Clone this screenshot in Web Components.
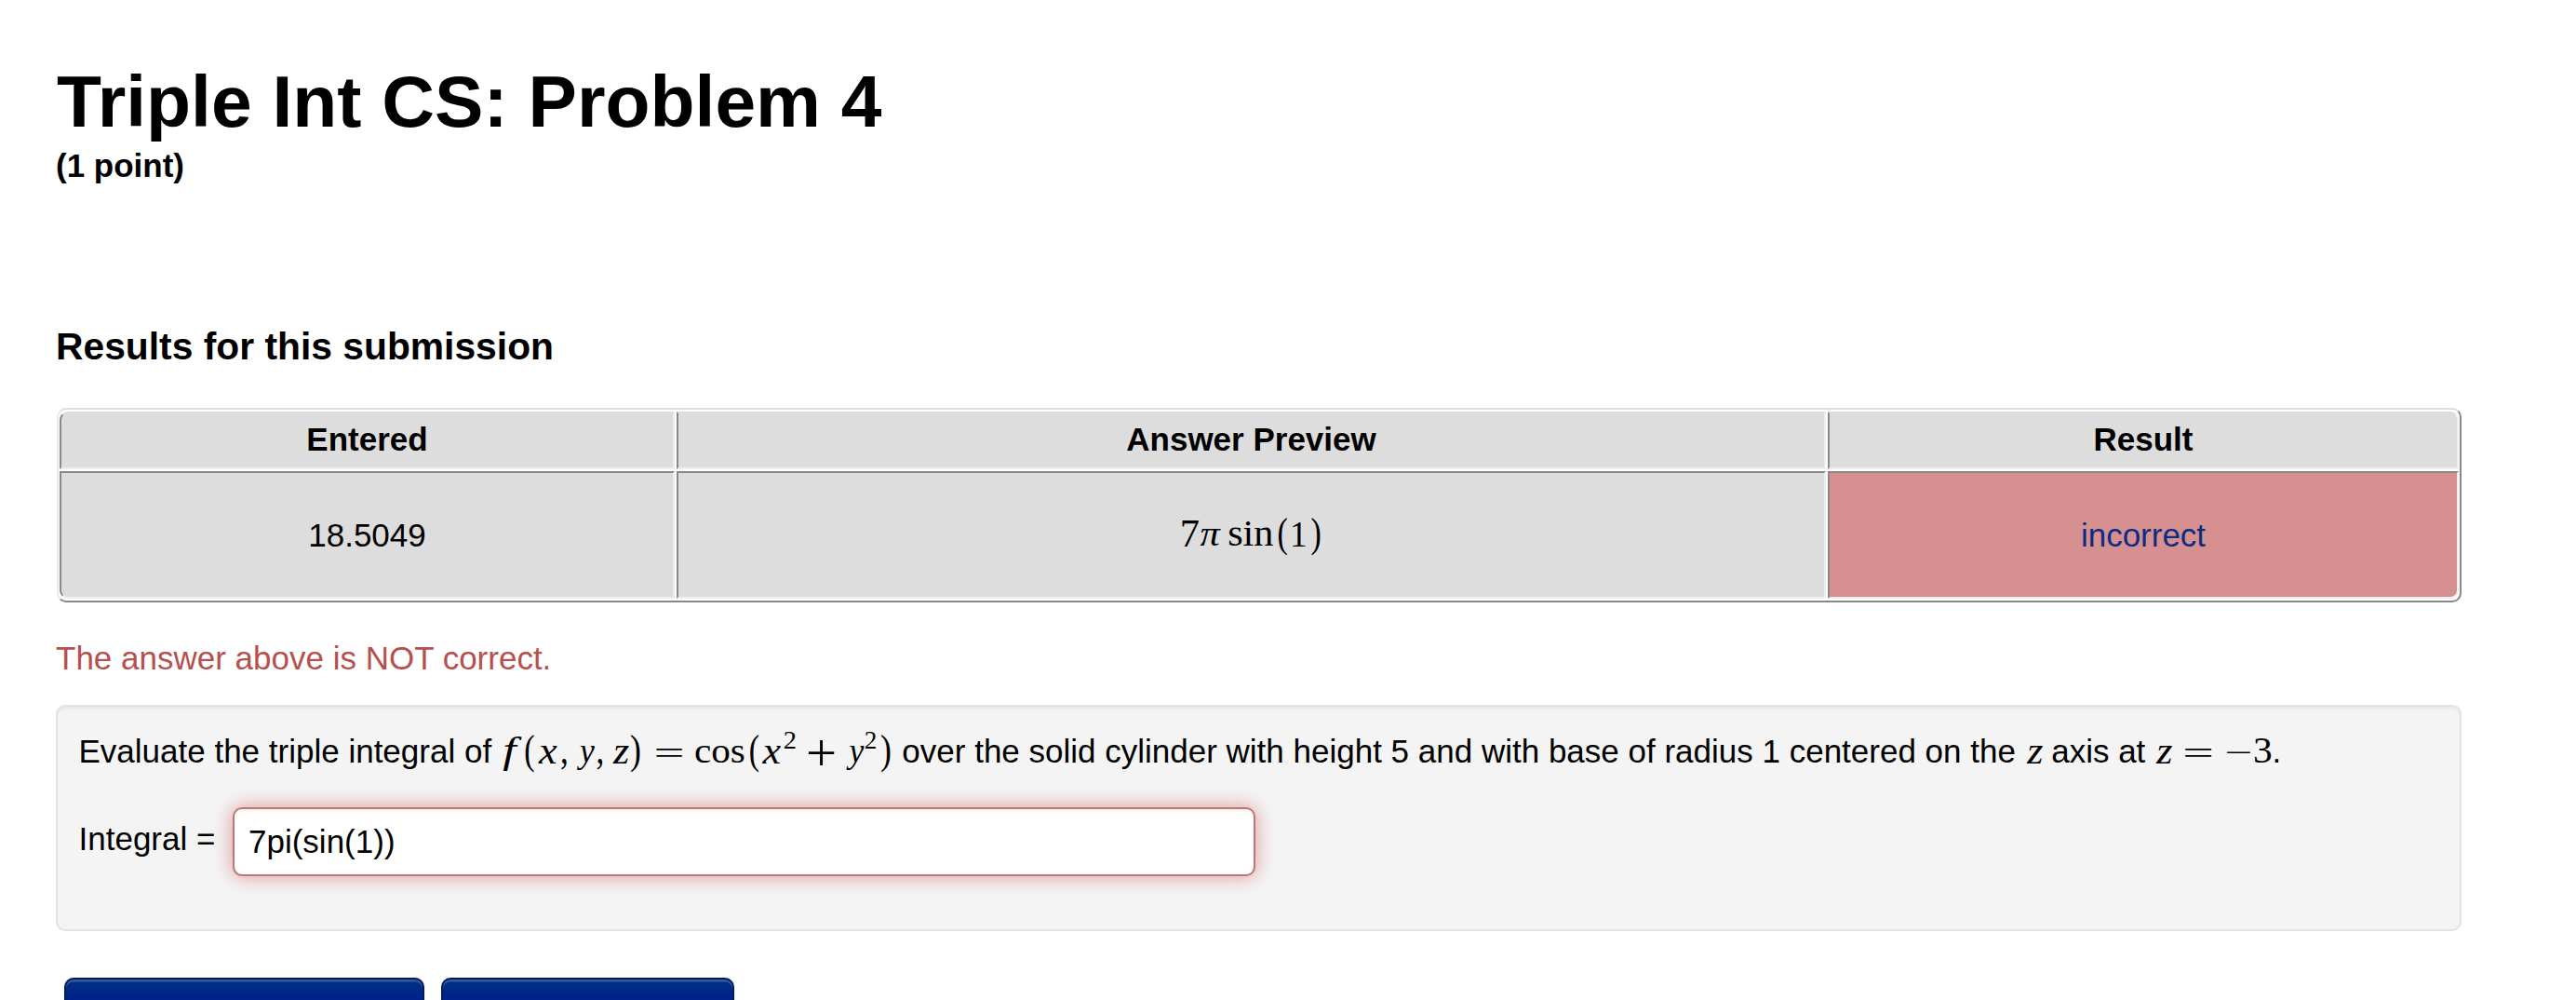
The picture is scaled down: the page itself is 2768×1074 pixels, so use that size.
<!DOCTYPE html>
<html lang="en">
<head>
<meta charset="utf-8">
<title>Triple Int CS: Problem 4</title>
<style>
html,body{margin:0;background:#fff;overflow:hidden;height:1074px}
body{font:35px/50px "Liberation Sans",Arial,sans-serif;color:#000}
</style>
</head>
<body>
<problem-page></problem-page>
<script>
class Base extends HTMLElement{
  constructor(){super();this.attachShadow({mode:'open'}).innerHTML=this.constructor.html}
}

// Draws a formula as SVG text; each token is fitted to its ink box [x0,y0,x1,y1].
const FORMULAS={
  preview:{w:152,h:50,ox:1268.5,oy:548,t:[
    ['7','n',1270,557,1288,585],['π','i',1289,567,1311.5,585],['sin','n',1320,557.5,1368,585],
    ['(','n',1373,554,1382.5,595],['1','n',1388.5,557.5,1402.5,584.5],[')','n',1409,554,1418,595]]},
  func:{w:421.8,h:50,ox:537.8,oy:782,t:[
    ['f','i',540,790,561,827.5],['(','n',564,788,573.5,829.5],['x','i',578,801,598,819.5],
    [',','n',603,815,608.5,826.5],['y','i',619.5,801,639,827.5],[',','n',641.5,815,647,826.5],
    ['z','i',658,801,676,819.5],[')','n',678,788,687.5,829.5],['=','n',705,804,732.5,813],
    ['cos','n',747,800.5,799.5,819.5],['(','n',805.5,788,815,829.5],['x','i',818.5,801,838.5,819.5],
    ['2','n',842.5,785,854.5,804],['+','n',868.5,795,896,822.5],['y','i',909,801,928.5,827.5],
    ['2','n',929.5,785,941,804],[')','n',947,788,956.5,829.5]]},
  z:{w:18.8,h:50,ox:2176,oy:782,t:[['z','i',2177.5,801,2195.5,819.5]]},
  eq:{w:126.5,h:50,ox:2315,oy:782,t:[
    ['z','i',2316.5,801,2334.5,819.5],['=','n',2348,804,2376,813],
    ['−','n',2392.5,807.5,2417.5,809.5],['3','n',2423,792,2440.5,820]]}
};
class MathFormula extends Base{
  static html=`<style>:host{display:inline-block;height:50px;line-height:0;vertical-align:-13px}
    svg{display:block;overflow:visible}text{font-family:"Liberation Serif",serif;font-size:42px}
    .i{font-style:italic}</style><svg></svg>`;
  connectedCallback(){
    const f=FORMULAS[this.getAttribute('name')],svg=this.shadowRoot.querySelector('svg');
    svg.setAttribute('width',f.w);svg.setAttribute('height',f.h);
    const c=document.createElement('canvas').getContext('2d');
    for(const [ch,st,x0,y0,x1,y1] of f.t){
      c.font=(st==='i'?'italic ':'')+'420px "Liberation Serif",serif';
      const m=c.measureText(ch);
      const l=-m.actualBoundingBoxLeft/10,r=m.actualBoundingBoxRight/10;
      const a=m.actualBoundingBoxAscent/10,d=m.actualBoundingBoxDescent/10;
      const sx=(x1-x0)/(r-l),sy=(y1-y0)/(a+d);
      const t=document.createElementNS('http://www.w3.org/2000/svg','text');
      t.setAttribute('class',st);
      t.setAttribute('transform',`translate(${x0-f.ox-l*sx} ${y0-f.oy+a*sy}) scale(${sx} ${sy})`);
      t.textContent=ch;svg.append(t);
    }
  }
}
customElements.define('math-formula',MathFormula);

customElements.define('problem-title',class extends Base{
  static html=`<style>:host{display:block;font-weight:bold}
    h1{margin:0;padding-left:1px;font-size:78.6px;line-height:88px;white-space:nowrap}
    div{line-height:50px}</style><h1><slot></slot></h1><div><slot name="points"></slot></div>`;
});

customElements.define('result-cell',class extends Base{
  static html=`<style>:host{display:flex;box-sizing:border-box;align-items:center;justify-content:center;
    background:#ddd;border:2px solid;border-color:#888 #eee #eee #888}
    :host([head]){font-weight:bold;border-top-color:#ddd;padding-bottom:2px}
    :host([bad]){background:#d69090;color:#0c2c84}
    :host([corner=tl]){border-top-left-radius:9px}:host([corner=tr]){border-top-right-radius:9px}
    :host([corner=bl]){border-bottom-left-radius:9px}:host([corner=br]){border-bottom-right-radius:9px}
  </style><slot></slot>`;
});
customElements.define('results-table',class extends Base{
  static html=`<style>:host{display:grid;box-sizing:border-box;width:2584px;height:209px;margin-left:1px;
    grid-template-columns:661px 1235px 678px;grid-template-rows:62px 137px;gap:2px;padding:2px 1px;
    border:2px solid;border-color:#ddd #888 #888 #eaeaea;border-radius:10px}
  </style><slot></slot>`;
});

customElements.define('answer-input',class extends Base{
  static html=`<style>:host{display:block;box-sizing:border-box;width:1099px;height:74px;line-height:70px;
    padding-left:15px;background:#fff;border:2px solid #bb7676;border-radius:10px;
    box-shadow:inset 0 2.5px 2.5px rgba(190,100,50,.09),0 0 20px 1px #e09c9c}
  </style><slot></slot>`;
});

customElements.define('problem-well',class extends Base{
  static html=`<style>:host{display:block;box-sizing:border-box;width:2585px;height:243px;padding:23px 22.5px;
    background:#f4f4f4;border:2px solid #e3e3e3;border-radius:10px;
    box-shadow:inset 0 2.5px 2.5px rgba(0,0,0,.05);white-space:nowrap}
    .p{height:50px}.row{display:flex;margin-top:35px}.label{padding-top:9px;width:165.5px}
  </style><div class="p"><slot></slot></div>
  <div class="row"><div class="label">Integral =</div><answer-input>7pi(sin(1))</answer-input></div>`;
});

customElements.define('submit-button',class extends Base{
  static html=`<style>:host{display:block;box-sizing:border-box;height:75px;padding:18px 0 0 33px;white-space:nowrap;
    font-size:34px;line-height:38px;color:#fff;text-shadow:0 -2.5px 0 rgba(10,15,40,.75);border:2px solid #001c5c;border-radius:10px;
    background:linear-gradient(#003082,#00208c 24px,#001c8c);
    box-shadow:inset 0 2.5px 0 rgba(255,255,255,.2),0 2px 5px rgba(0,0,0,.05)}
    :host([wide]){width:387px}:host(:not([wide])){width:315px}
  </style><slot></slot>`;
});

customElements.define('problem-page',class extends Base{
  static html=`<style>:host{display:flow-root;height:1074px;overflow:hidden;padding:65px 0 0 60px;box-sizing:border-box}
    h3{margin:144px 0 41px;font-size:40.8px;line-height:50px}
    .note{margin:35px 0 25px;color:#b5504e}
    .buttons{display:flex;gap:18px;padding:50px 0 0 9px}
  </style>
  <problem-title>Triple Int CS: Problem 4<span slot="points">(1 point)</span></problem-title>
  <h3>Results for this submission</h3>
  <results-table>
    <result-cell head corner="tl">Entered</result-cell><result-cell head>Answer Preview</result-cell><result-cell head corner="tr">Result</result-cell>
    <result-cell corner="bl">18.5049</result-cell><result-cell><math-formula name="preview"></math-formula></result-cell><result-cell bad corner="br">incorrect</result-cell>
  </results-table>
  <div class="note">The answer above is NOT correct.</div>
  <problem-well>Evaluate the triple integral of <math-formula name="func"></math-formula> over the solid cylinder with height 5 and with base of radius 1 centered on the <math-formula name="z"></math-formula> axis at <math-formula name="eq"></math-formula>.</problem-well>
  <div class="buttons"><submit-button wide>Preview My Answers</submit-button><submit-button>Submit Answers</submit-button></div>`;
});
</script>
</body>
</html>
